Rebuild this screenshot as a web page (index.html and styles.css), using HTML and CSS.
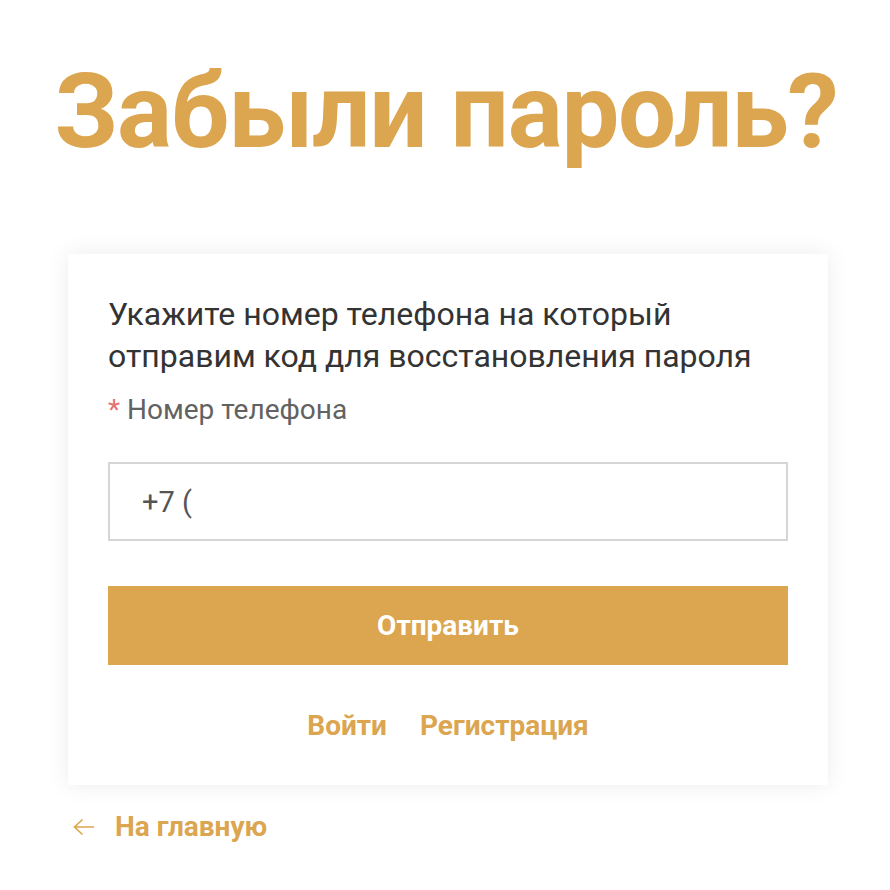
FILE: index.html
```html
<!DOCTYPE html>
<html lang="ru">
<head>
<meta charset="utf-8">
<link rel="stylesheet" href="styles.css">
</head>
<body>
<div class="page">
  <h1 class="title">Забыли пароль?</h1>
  <div class="column">
    <div class="card">
      <p class="intro">Укажите номер телефона на который отправим код для восстановления пароля</p>
      <label class="label"><span class="req">*</span> Номер телефона</label>
      <div class="input">+7 (</div>
      <button class="btn">Отправить</button>
      <div class="links">
        <a class="link">Войти</a>
        <a class="link">Регистрация</a>
      </div>
    </div>
    <a class="back"><svg class="arrow" width="22" height="18" viewBox="0 0 22 18"><path d="M21 9H1.5M9.5 1.5L1.5 9l8 7.5" fill="none" stroke="#dca54f" stroke-width="1.6"/></svg>На главную</a>
  </div>
</div>
</body>
</html>
```
FILE: styles.css
```css
* { box-sizing: border-box; }
html, body { margin: 0; padding: 0; background: #fff; }
body { font-family: Roboto, "Noto Sans", sans-serif; }
.page {
  width: 890px;
  padding-left: 6px;
  display: flex;
  flex-direction: column;
  align-items: center;
}
.title {
  margin: 52px 0 0;
  font-size: 103px;
  font-weight: 700;
  color: #dca54f;
  line-height: 120px;
  letter-spacing: -1.3px;
  transform: translateX(-2px);
}
.column {
  width: 760px;
  display: flex;
  flex-direction: column;
}
.card {
  margin-top: 82px;
  width: 760px;
  background: #fff;
  box-shadow: 0 0 22px rgba(0,0,0,0.08);
  padding: 39px 40px 42px;
  display: flex;
  flex-direction: column;
}
.intro {
  margin: 0;
  font-size: 32px;
  line-height: 42px;
  color: #333;
}
.label {
  margin-top: 16px;
  font-size: 28px;
  line-height: 34px;
  color: #626262;
}
.req { color: #e57373; }
.input {
  margin-top: 35px;
  height: 79px;
  border: 2px solid #d6d6d6;
  padding: 0 32px;
  display: flex;
  align-items: center;
  font-size: 29px;
  color: #555;
}
.btn {
  margin-top: 45px;
  height: 79px;
  border: 0;
  background: #dca54f;
  color: #fff;
  font-family: Roboto, sans-serif;
  font-size: 28px;
  font-weight: 700;
}
.links {
  margin-top: 44px;
  display: flex;
  justify-content: center;
  gap: 33px;
  line-height: 34px;
}
.link {
  font-size: 28px;
  font-weight: 700;
  color: #dca54f;
}
.back {
  align-self: flex-start;
  margin: 25px 0 0 5px;
  font-size: 28px;
  line-height: 34px;
  font-weight: 700;
  color: #dca54f;
  display: flex;
  align-items: center;
}
.arrow { margin-right: 20px; }
```
